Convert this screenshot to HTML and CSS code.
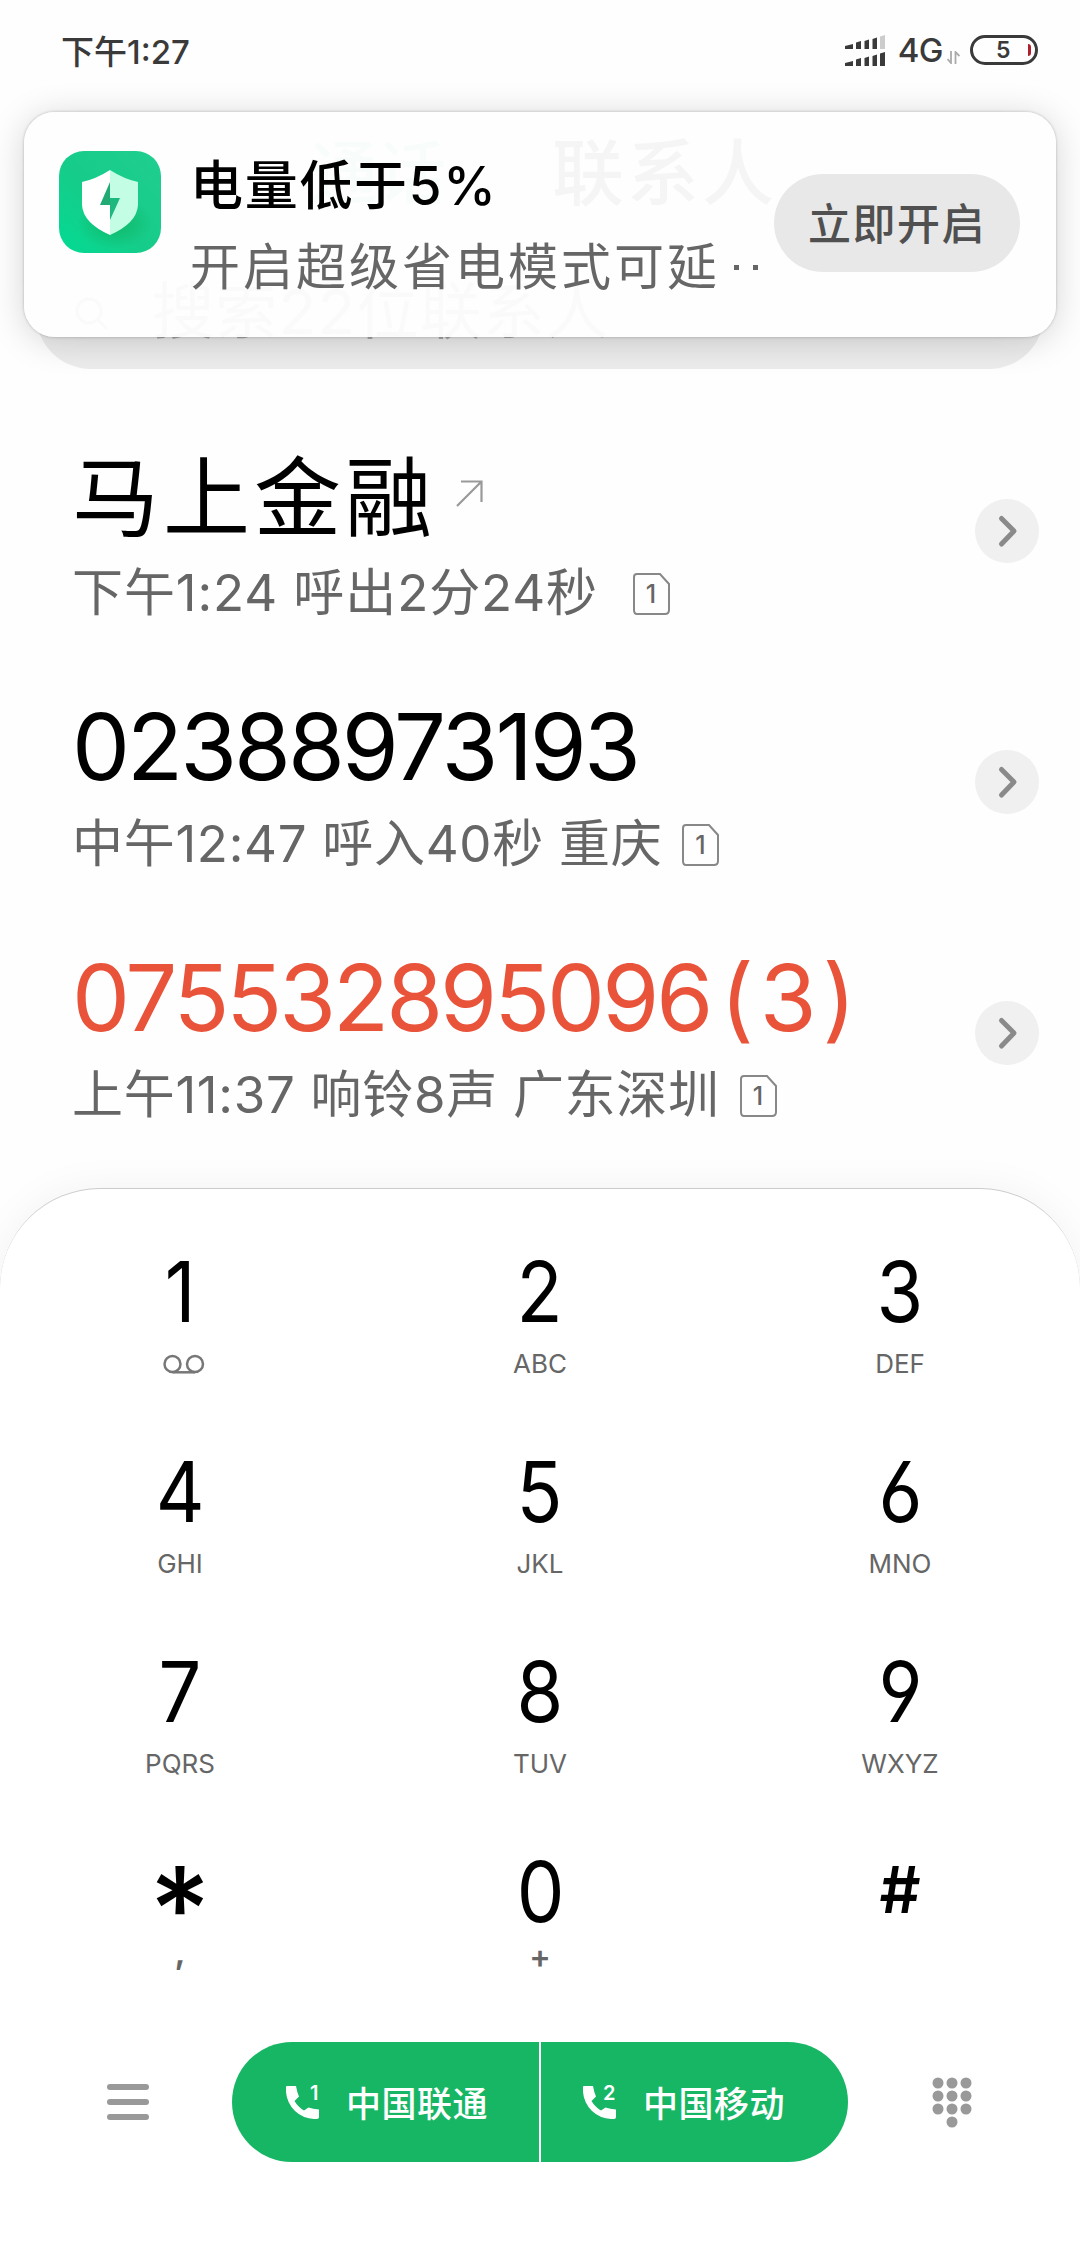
FILE: index.html
```html
<!DOCTYPE html>
<html lang="zh-CN">
<head>
    <meta charset="UTF-8">
    <meta name="viewport" content="width=device-width, initial-scale=1.0">
    <title>通话</title>
    <link rel="stylesheet" href="styles.css">
</head>
<body>
    <svg class="defs" width="0" height="0">
        <symbol id="sim" viewBox="0 0 37 42">
            <path d="M4 1H27L36 11V37Q36 41 32 41H4Q1 41 1 37V4Q1 1 4 1Z" fill="none" stroke="#888" stroke-width="2"/>
        </symbol>
        <symbol id="chevron" viewBox="0 0 64 64">
            <path d="M26.500 19.500L39 32L26.500 45" fill="none" stroke="#8a8a8a" stroke-width="5" stroke-linecap="round" stroke-linejoin="round"/>
        </symbol>
        <symbol id="phone" viewBox="0 0 33 33">
            <path d="M1 0H10Q11 6 13 10.500L8.500 15Q12 21 18 24.500L22.500 21.500Q27 23 33 23.500V31Q33 33 31 33Q18 33.500 9 25Q-1 15 0 1Q0 0 1 0Z" fill="#fff"/>
        </symbol>
    </svg>

    <div class="status-bar">
        <span class="clock">下午1:27</span>
        <div class="status-icons">
            <svg class="signal" width="40" height="31" viewBox="0 0 40 31">
                <g fill="#3a3a3a">
                    <path d="M0 14V11L8 9V14ZM11 14V7.500L16 6V14ZM19.500 14V6L24 4.500V14ZM27.500 14V4L32 2.500V14Z"/>
                    <path d="M0 31V28L8 26V31ZM11 31V24.500L16 23V31ZM19.500 31V23L24 21.500V31ZM27.500 31V21L32 19.500V31ZM35 31V18.500L40 17V31Z"/>
                </g>
                <path d="M35 14V1.500L40 0V14Z" fill="#ccc"/>
            </svg>
            <span class="network">4G</span>
            <svg class="traffic" width="13" height="13" viewBox="0 0 13 13">
                <path d="M4 0V12L0.500 8M8.500 13V1L12.500 5" fill="none" stroke="#aaa" stroke-width="1.800"/>
            </svg>
            <div class="battery"><span>5</span><i></i></div>
        </div>
    </div>

    <div class="header">
        <div class="tabs">
            <span class="tab active">通话</span>
            <span class="tab">联系人</span>
        </div>
        <div class="search">
            <svg width="36" height="36" viewBox="0 0 36 36">
                <circle cx="15" cy="15" r="12" fill="none" stroke="#aaa" stroke-width="3"/>
                <path d="M24 24L33 33" stroke="#aaa" stroke-width="3"/>
            </svg>
            <span>搜索22位联系人</span>
        </div>
    </div>

    <div class="calls">
        <div class="call">
            <div class="info">
                <div class="name cjk">马上金融
                    <svg class="outgoing" width="27" height="27" viewBox="0 0 27 27">
                        <path d="M1 26L25 2M5 1.500H25.500V22" fill="none" stroke="#999" stroke-width="2.200"/>
                    </svg>
                </div>
                <div class="detail first"><span>下午1:24 呼出2分24秒</span><div class="sim"><svg><use href="#sim"/></svg><b>1</b></div></div>
            </div>
            <div class="more"><svg><use href="#chevron"/></svg></div>
        </div>
        <div class="call">
            <div class="info">
                <div class="name">02388973193</div>
                <div class="detail"><span>中午12:47 呼入40秒 重庆</span><div class="sim"><svg><use href="#sim"/></svg><b>1</b></div></div>
            </div>
            <div class="more"><svg><use href="#chevron"/></svg></div>
        </div>
        <div class="call missed">
            <div class="info">
                <div class="name">075532895096<em>(3)</em></div>
                <div class="detail"><span>上午11:37 响铃8声 广东深圳</span><div class="sim"><svg><use href="#sim"/></svg><b>1</b></div></div>
            </div>
            <div class="more"><svg><use href="#chevron"/></svg></div>
        </div>
    </div>

    <div class="dialer">
        <div class="keys">
            <div class="key">
                <span class="num">1</span>
                <span class="sub">
                    <svg class="voicemail" width="42" height="20" viewBox="0 0 42 20">
                        <circle cx="9.500" cy="10" r="8" fill="none" stroke="#777" stroke-width="2.500"/>
                        <circle cx="32" cy="10" r="8" fill="none" stroke="#777" stroke-width="2.500"/>
                        <path d="M9.500 18.300H32" stroke="#777" stroke-width="2.500"/>
                    </svg>
                </span>
            </div>
            <div class="key"><span class="num">2</span><span class="sub">ABC</span></div>
            <div class="key"><span class="num">3</span><span class="sub">DEF</span></div>
            <div class="key"><span class="num">4</span><span class="sub">GHI</span></div>
            <div class="key"><span class="num">5</span><span class="sub">JKL</span></div>
            <div class="key"><span class="num">6</span><span class="sub">MNO</span></div>
            <div class="key"><span class="num">7</span><span class="sub">PQRS</span></div>
            <div class="key"><span class="num">8</span><span class="sub">TUV</span></div>
            <div class="key"><span class="num">9</span><span class="sub">WXYZ</span></div>
            <div class="key"><span class="num star">*</span><span class="sub comma">,</span></div>
            <div class="key"><span class="num">0</span><span class="sub plus">+</span></div>
            <div class="key"><span class="num hash">#</span></div>
        </div>

        <div class="actions">
            <div class="menu"><i></i><i></i><i></i></div>
            <div class="dial">
                <div class="carrier">
                    <div class="phone"><svg><use href="#phone"/></svg><b>1</b></div>
                    <span>中国联通</span>
                </div>
                <div class="carrier">
                    <div class="phone"><svg><use href="#phone"/></svg><b>2</b></div>
                    <span>中国移动</span>
                </div>
            </div>
            <svg class="pad" width="40" height="51" viewBox="0 0 40 51" fill="#999">
                <circle cx="6" cy="6" r="5.500"/><circle cx="20" cy="6" r="5.500"/><circle cx="34" cy="6" r="5.500"/>
                <circle cx="6" cy="19" r="5.500"/><circle cx="20" cy="19" r="5.500"/><circle cx="34" cy="19" r="5.500"/>
                <circle cx="6" cy="32" r="5.500"/><circle cx="20" cy="32" r="5.500"/><circle cx="34" cy="32" r="5.500"/>
                <circle cx="20" cy="45" r="5.500"/>
            </svg>
        </div>
    </div>

    <!-- low battery heads-up, floats over the header -->
    <div class="notification">
        <svg class="app-icon" width="102" height="102" viewBox="0 0 102 102">
            <defs>
                <linearGradient id="app-bg" x1="1" y1="0" x2="0" y2="1">
                    <stop offset="0" stop-color="#20ce90"/>
                    <stop offset=".55" stop-color="#16cc8a"/>
                    <stop offset="1" stop-color="#02db93"/>
                </linearGradient>
                <radialGradient id="app-shade">
                    <stop offset="0" stop-color="#10b868"/>
                    <stop offset="1" stop-color="#10b868" stop-opacity="0"/>
                </radialGradient>
            </defs>
            <rect width="102" height="102" rx="25" fill="url(#app-bg)"/>
            <ellipse cx="56" cy="72" rx="38" ry="26" fill="url(#app-shade)"/>
            <path d="M51 19Q37 28 23 31V54Q24 72 51 84Z" fill="#fff"/>
            <path d="M51 19Q65 28 79 31V54Q78 72 51 84Z" fill="#c3fde4"/>
            <path d="M51 31L41 54H51V69Z" fill="#22aa74"/>
            <path d="M51 31V47H61L51 69Z" fill="#1db87d"/>
        </svg>
        <div class="message">
            <div class="title">电量低于5%</div>
            <div class="text">开启超级省电模式可延<i></i><i></i></div>
        </div>
        <div class="open-btn">立即开启</div>
    </div>
</body>
</html>
```
FILE: styles.css
```css
* {
    margin: 0;
    padding: 0;
    box-sizing: border-box;
}

body {
    width: 1080px;
    height: 2248px;
    position: relative;
    overflow: hidden;
    background: #fefefe;
    font-family: Inter, "Noto Sans CJK SC", sans-serif;
    color: #000;
    white-space: nowrap;
}

.defs {
    display: none;
}

i, em {
    font-style: normal;
}

/* status bar */

.status-bar {
    height: 100px;
    padding: 0 42px 0 61px;
    display: flex;
    align-items: center;
    justify-content: space-between;
    color: #3a3a3a;
}

.clock {
    font-size: 33px;
    font-weight: 500;
}

.status-icons {
    display: flex;
    align-items: center;
}

.network {
    margin-left: 13px;
    font-size: 33px;
    font-weight: 500;
    letter-spacing: -0.5px;
}

.traffic {
    margin: 14px 10px 0 4px;
}

.battery {
    width: 68px;
    height: 30px;
    padding: 0 4px 0 25px;
    border: 3px solid #3a3a3a;
    border-radius: 15px;
    display: flex;
    align-items: center;
    justify-content: space-between;
    font-size: 23px;
    font-weight: 600;
}

.battery span {
    margin-left: -2px;
}

.battery i {
    width: 3px;
    height: 12px;
    border-radius: 0 3px 3px 0;
    background: #b0202c;
}

/* header */

.header {
    height: 269px;
    padding: 0 36px;
    display: flex;
    flex-direction: column;
    justify-content: flex-end;
}

.tabs {
    height: 159px;
    padding: 20px 0 0 274px;
    display: flex;
    align-items: flex-start;
    gap: 106px;
    font-size: 72px;
    font-weight: 500;
    letter-spacing: 3px;
    line-height: 106px;
    color: #333;
}

.tab.active {
    color: #6fd3b8;
    font-size: 68px;
    letter-spacing: 0;
}

.search {
    height: 110px;
    padding-left: 38px;
    border-radius: 55px;
    background: #ececec;
    display: flex;
    align-items: center;
    gap: 42px;
    color: #aaa;
    font-size: 62px;
    line-height: 110px;
    letter-spacing: 1.2px;
}

.search span {
    margin-top: -4px;
}

/* call log */

.calls {
    height: 819px;
    padding: 55px 41px 0 72px;
}

.call {
    height: 251px;
    padding-top: 16px;
    display: flex;
    justify-content: space-between;
}

.name {
    height: 112px;
    font-size: 92px;
    line-height: 112px;
    letter-spacing: -3px;
}

.name.cjk {
    font-size: 87px;
    line-height: 117px;
    letter-spacing: 4px;
    display: flex;
}

.outgoing {
    margin: 40px 0 0 20px;
}

.missed .name {
    color: #e9533a;
}

.missed em {
    margin-left: 10px;
    letter-spacing: 6px;
}

.detail {
    height: 84px;
    display: flex;
    align-items: center;
    gap: 20px;
    color: #666;
    font-size: 51px;
    line-height: 84px;
    letter-spacing: 0.7px;
}

.detail > span {
    height: 86px;
}

.detail.first {
    gap: 35px;
    letter-spacing: 0.9px;
}

.sim {
    width: 37px;
    height: 42px;
    display: grid;
    place-items: center;
}

.sim svg, .sim b {
    grid-area: 1 / 1;
}

.sim svg {
    width: 37px;
    height: 42px;
}

.sim b {
    font-size: 25px;
    font-weight: 500;
    line-height: 42px;
}

.more {
    width: 64px;
    height: 64px;
    margin-top: 59px;
    border-radius: 50%;
    background: #f0f0f0;
}

.more svg {
    width: 64px;
    height: 64px;
}

/* dial pad */

.dialer {
    height: 1060px;
    border-top: 1px solid #ccc;
    border-radius: 100px 100px 0 0;
    background: #fff;
    box-shadow: 0 0 40px rgba(0, 0, 0, 0.05);
}

.keys {
    height: 833px;
    padding-top: 53px;
    display: grid;
    grid-template-columns: repeat(3, 1fr);
    grid-auto-rows: 200px;
}

.key {
    display: flex;
    flex-direction: column;
    align-items: center;
}

.num {
    height: 100px;
    font-size: 84px;
    font-weight: 380;
    line-height: 100px;
    transform: scaleX(0.9);
    font-feature-settings: "cv03", "cv04";
}

.star {
    font-size: 118px;
    font-weight: 500;
    line-height: 134px;
    transform: none;
}

.hash {
    font-size: 64px;
    font-weight: 600;
    line-height: 95px;
    transform: none;
}

.sub {
    height: 44px;
    display: flex;
    align-items: center;
    font-size: 26px;
    line-height: 44px;
    color: #666;
}

.voicemail {
    margin-left: 8px;
}

.comma, .plus {
    height: 30px;
    font-size: 32px;
    font-weight: 600;
    line-height: 30px;
}

.comma {
    height: 22px;
    font-weight: 700;
    line-height: 22px;
}

.actions {
    height: 120px;
    margin-top: 20px;
    padding: 0 107px;
    display: flex;
    align-items: center;
}

.menu {
    width: 42px;
    margin-right: 83px;
    display: flex;
    flex-direction: column;
    gap: 9px;
}

.menu i {
    height: 6px;
    border-radius: 3px;
    background: #999;
}

.dial {
    width: 616px;
    height: 120px;
    border-radius: 60px;
    overflow: hidden;
    display: flex;
    gap: 2px;
}

.carrier {
    width: 307px;
    padding-left: 54px;
    background: #16b664;
    display: flex;
    align-items: center;
    gap: 27px;
    color: #fff;
    font-size: 35px;
    font-weight: 500;
    letter-spacing: 0.5px;
}

.carrier > span {
    margin-top: -2px;
}

.carrier + .carrier {
    padding-left: 42px;
}

.phone {
    width: 33px;
    height: 33px;
    display: grid;
}

.phone svg, .phone b {
    grid-area: 1 / 1;
}

.phone svg {
    width: 33px;
    height: 33px;
}

.phone b {
    justify-self: end;
    font-size: 20px;
    font-weight: 600;
    line-height: 14px;
}

.pad {
    margin-left: 84px;
}

/* notification */

.notification {
    position: absolute;
    top: 112px;
    left: 24px;
    width: 1032px;
    height: 225px;
    padding: 39px 36px 0 35px;
    border-radius: 31px;
    background: rgba(254, 254, 254, 0.955);
    box-shadow: 0 0 3px rgba(0, 0, 0, 0.25), 0 4px 34px rgba(0, 0, 0, 0.17);
    display: flex;
}

.message {
    width: 584px;
    margin-left: 29px;
}

.title {
    height: 70px;
    font-size: 53px;
    font-weight: 500;
    line-height: 71px;
    letter-spacing: 1.7px;
}

.text {
    height: 92px;
    display: flex;
    align-items: center;
    font-size: 50px;
    line-height: 92px;
    letter-spacing: 3px;
    color: #666;
}

.text i {
    width: 5px;
    height: 5px;
    margin-left: 14px;
    background: #666;
}

.open-btn {
    width: 246px;
    height: 98px;
    margin-top: 23px;
    border-radius: 49px;
    background: #e8e8e8;
    color: #505050;
    font-size: 43px;
    font-weight: 500;
    line-height: 100px;
    letter-spacing: 1.5px;
    text-align: center;
}
```
